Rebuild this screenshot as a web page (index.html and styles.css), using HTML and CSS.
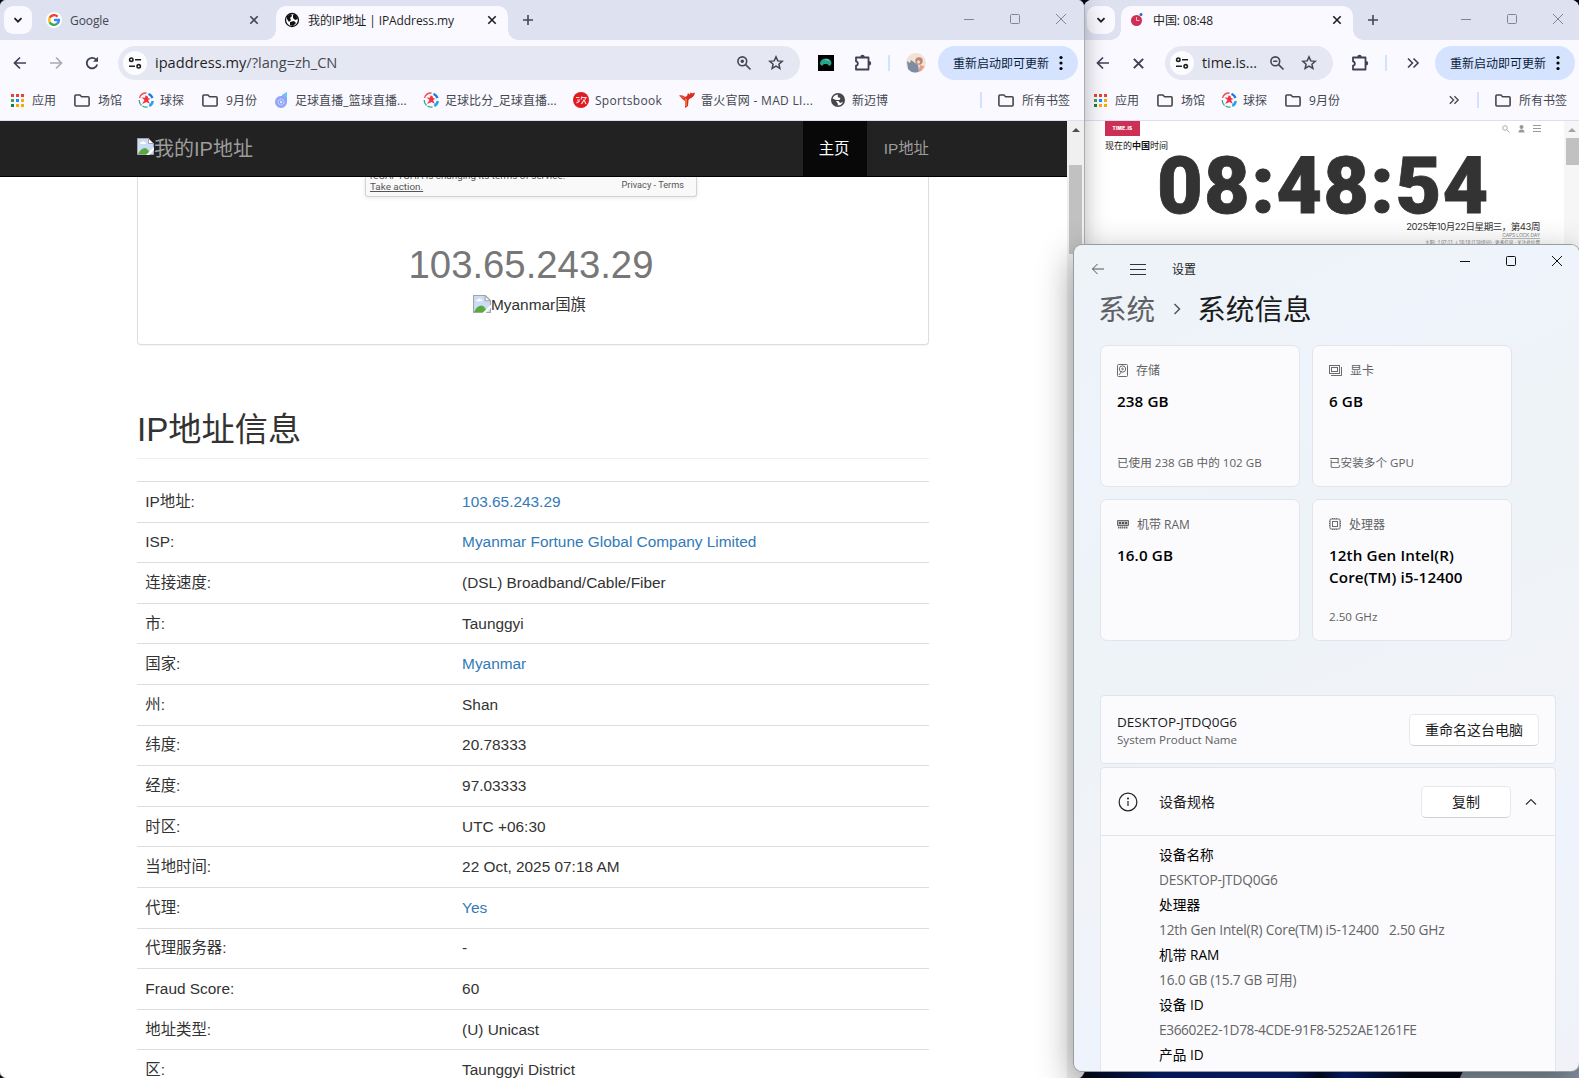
FILE: index.html
```html
<!DOCTYPE html>
<html lang="zh-CN">
<head>
    <meta charset="UTF-8">
    <meta name="viewport" content="width=device-width, initial-scale=1.0">
    <title>我的IP地址 | IPAddress.my</title>
    <link rel="stylesheet" href="styles.css">
</head>
<body>
    <!-- Icon dipakai bersama -->
    <svg class="sprite" width="0" height="0">
        <symbol id="i-down" viewBox="0 0 12 12"><path d="M2.5 4.2 6 7.7l3.5-3.5" fill="none" stroke="currentColor" stroke-width="1.8"/></symbol>
        <symbol id="i-x" viewBox="0 0 12 12"><path d="M2.3 2.3l7.4 7.4M9.7 2.3 2.3 9.7" fill="none" stroke="currentColor" stroke-width="1.6"/></symbol>
        <symbol id="i-plus" viewBox="0 0 12 12"><path d="M6 1v10M1 6h10" fill="none" stroke="currentColor" stroke-width="1.6"/></symbol>
        <symbol id="i-min" viewBox="0 0 12 12"><path d="M1 6.5h10" fill="none" stroke="currentColor"/></symbol>
        <symbol id="i-max" viewBox="0 0 12 12"><rect x="1.5" y="1.5" width="9" height="9" rx="1" fill="none" stroke="currentColor"/></symbol>
        <symbol id="i-close" viewBox="0 0 12 12"><path d="M1 1l10 10M11 1 1 11" fill="none" stroke="currentColor"/></symbol>
        <symbol id="i-back" viewBox="0 0 16 16"><path d="M14 8H3M8 2.5 2.5 8 8 13.5" fill="none" stroke="currentColor" stroke-width="1.7"/></symbol>
        <symbol id="i-fwd" viewBox="0 0 16 16"><path d="M2 8h11M8 2.5 13.500 8 8 13.500" fill="none" stroke="currentColor" stroke-width="1.7"/></symbol>
        <symbol id="i-reload" viewBox="0 0 16 16"><path d="M13.200 9.500A5.300 5.300 0 1 1 12 4.500l1.300 1.300" fill="none" stroke="currentColor" stroke-width="1.800"/><path d="M14 1.800v5H9z" fill="currentColor"/></symbol>
        <symbol id="i-tune" viewBox="0 0 16 16"><g fill="none" stroke="currentColor" stroke-width="1.600"><circle cx="4.300" cy="4.700" r="1.700"/><path d="M8 4.700h6M2 11.300h6"/><circle cx="11.700" cy="11.300" r="1.700"/></g></symbol>
        <symbol id="i-zoomin" viewBox="0 0 16 16"><g fill="none" stroke="currentColor" stroke-width="1.600"><circle cx="6.300" cy="6.300" r="4.400"/><path d="M9.600 9.600 14.500 14.500"/></g><circle cx="6.300" cy="6.300" r="1.700" fill="currentColor"/></symbol>
        <symbol id="i-zoomout" viewBox="0 0 16 16"><g fill="none" stroke="currentColor" stroke-width="1.600"><circle cx="6.300" cy="6.300" r="4.400"/><path d="M9.600 9.600 14.500 14.500M4.200 6.300h4.200"/></g></symbol>
        <symbol id="i-star" viewBox="0 0 16 16"><path d="M8 1.900l1.800 4 4.400.4-3.300 2.900 1 4.300L8 11.200l-3.900 2.300 1-4.300L1.800 6.300l4.400-.4z" fill="none" stroke="currentColor" stroke-width="1.500"/></symbol>
        <symbol id="i-puzzle" viewBox="0 0 18 18"><path d="M2 3.500h12.500v12H2v-3.800q1.800-.2 1.800-2.200T2 7.300z" fill="none" stroke="currentColor" stroke-width="1.800" stroke-linejoin="round"/><path d="M6.300 3a2.200 2.200 0 0 1 4.400 0zM15 7.100a2.200 2.200 0 0 1 0 4.400z" fill="currentColor"/></symbol>
        <symbol id="i-dots" viewBox="0 0 4 16"><circle cx="2" cy="2.500" r="1.600"/><circle cx="2" cy="8" r="1.600"/><circle cx="2" cy="13.500" r="1.600"/></symbol>
        <symbol id="i-more" viewBox="0 0 14 12"><path d="M2 1.500 6.500 6 2 10.500M7.500 1.500 12 6l-4.500 4.500" fill="none" stroke="currentColor" stroke-width="1.600"/></symbol>
        <symbol id="i-folder" viewBox="0 0 16 13"><path d="M.9 11V2q0-1 1-1h4l1.700 1.700h6.500q1 0 1 1V11q0 1-1 1H1.900q-1 0-1-1z" fill="none" stroke="#474747" stroke-width="1.600"/></symbol>
        <symbol id="i-apps" viewBox="0 0 13 13">
            <path d="M0 0h3v3H0zM5 0h3v3H5zM10 0h3v3h-3z" fill="#ea4335"/>
            <path d="M0 5h3v3H0z" fill="#34a853"/><path d="M5 5h3v3H5z" fill="#1a8cff"/><path d="M10 5h3v3h-3z" fill="#fbab05"/>
            <path d="M0 10h3v3H0z" fill="#188038"/><path d="M5 10h3v3H5zM10 10h3v3h-3z" fill="#f9ab00"/>
        </symbol>
        <symbol id="i-ball" viewBox="0 0 16 16">
            <g fill="none" stroke-width="1.300"><path d="M1.500 6a7 7 0 0 1 7-5" stroke="#f0504a"/><path d="M10.500 1.800A7 7 0 0 1 14.500 6" stroke="#1d7be0" stroke-width="2.400"/><path d="M14.800 9a7 7 0 0 1-3.500 5" stroke="#19a5ee" stroke-width="2.400"/><path d="M9.500 15a7 7 0 0 1-5-1" stroke="#36b37a"/><path d="M3.500 13.500A7 7 0 0 1 1.200 8" stroke="#2fa7a0"/></g>
            <path d="M3.500 5.500l3.500.3L7.500 3.500l2 .5.500 2 2.500 1-2.500 1 2 4-3.500-2L4 12l2.500-4z" fill="#f2323e"/>
        </symbol>
        <symbol id="i-broken" viewBox="0 0 17 17">
            <path d="M.5.500h11l5 5v11H.5z" fill="#cbdcf7" stroke="#a4a4a4"/>
            <path d="M11.500.500v5h5z" fill="#fff" stroke="#a4a4a4"/>
            <path d="M3 6q0-2 2-2 1-1.500 2.500 0Q9.500 4.300 9 6z" fill="#fff"/>
            <path d="M1 16q3-6 7-6 3 0 5 6z" fill="#58ab3a"/>
            <path class="tear" d="M9 17 17 9v3l-5 5z"/>
        </symbol>
    </svg>

    <!-- time.is -->
    <section class="window time-window">
        <div class="tabstrip">
            <span class="tab-search"><svg width="12" height="12"><use href="#i-down"/></svg></span>
            <div class="tab active">
                <svg class="favicon" width="16" height="16" viewBox="0 0 16 16"><circle cx="7.500" cy="8.500" r="5.500" fill="#cd2f55"/><path d="M7.500 5v3.500h3" stroke="#f5b9c6" fill="none"/><circle cx="12" cy="2.500" r="1.500" fill="#3c62b0"/></svg>
                <span class="tab-title">中国: 08:48</span>
                <svg width="12" height="12"><use href="#i-x"/></svg>
            </div>
            <svg class="new-tab" width="12" height="12"><use href="#i-plus"/></svg>
            <div class="controls">
                <svg width="12" height="12"><use href="#i-min"/></svg>
                <svg width="12" height="12"><use href="#i-max"/></svg>
                <svg width="12" height="12"><use href="#i-close"/></svg>
            </div>
        </div>
        <div class="toolbar">
            <span class="tool"><svg width="16" height="16"><use href="#i-back"/></svg></span>
            <span class="tool"><svg width="15" height="15"><use href="#i-x"/></svg></span>
            <div class="omnibox">
                <span class="site-info"><svg width="16" height="16"><use href="#i-tune"/></svg></span>
                <span class="url">time.is...</span>
                <svg width="16" height="16"><use href="#i-zoomout"/></svg>
                <svg width="16" height="16"><use href="#i-star"/></svg>
            </div>
            <svg class="puzzle" width="18" height="18"><use href="#i-puzzle"/></svg>
            <i class="sep"></i>
            <svg class="more" width="14" height="12"><use href="#i-more"/></svg>
            <span class="update">重新启动即可更新<svg width="4" height="16"><use href="#i-dots"/></svg></span>
        </div>
        <div class="bookmarks">
            <span class="bm"><svg class="apps" width="13" height="13"><use href="#i-apps"/></svg>应用</span>
            <span class="bm"><svg class="folder" width="16" height="13"><use href="#i-folder"/></svg>场馆</span>
            <span class="bm"><svg width="16" height="16"><use href="#i-ball"/></svg>球探</span>
            <span class="bm"><svg class="folder" width="16" height="13"><use href="#i-folder"/></svg>9月份</span>
            <svg class="bm-more" width="12" height="10"><use href="#i-more"/></svg>
            <i class="sep"></i>
            <span class="bm"><svg class="folder" width="16" height="13"><use href="#i-folder"/></svg>所有书签</span>
        </div>
        <div class="viewport">
            <div class="time-page">
                <div class="time-head">
                    <span class="time-logo">TIME.IS</span>
                    <div class="time-icons">
                        <svg width="8" height="8" viewBox="0 0 8 8"><circle cx="3" cy="3" r="2.300" fill="none" stroke="#aaa"/><path d="M5 5l2.500 2.500" stroke="#aaa"/></svg>
                        <svg width="7" height="8" viewBox="0 0 7 8"><circle cx="3.500" cy="2" r="2" fill="#999"/><path d="M.5 7.500q0-3 3-3t3 3z" fill="#999"/></svg>
                        <svg width="8" height="7" viewBox="0 0 8 7"><path d="M0 .5h8M0 3.500h8M0 6.500h8" stroke="#999"/></svg>
                    </div>
                </div>
                <p class="time-place">现在的<b>中国</b>时间</p>
                <div class="clock">08:48:54</div>
                <p class="time-date">2025年10月22日星期三，第43周</p>
                <p class="time-day"><span>CAPS LOCK DAY</span></p>
                <p class="time-sun">太阳: ↑07:11 ↓18:18 (11时8分) · <u>更多信息</u> · <u>关注此位置</u></p>
            </div>
            <div class="scrollbar"><i class="arrow"></i><i class="thumb"></i></div>
        </div>
    </section>

    <!-- ipaddress.my -->
    <section class="window ip-window">
        <div class="tabstrip">
            <span class="tab-search"><svg width="12" height="12"><use href="#i-down"/></svg></span>
            <div class="tab">
                <svg class="favicon google" width="16" height="16" viewBox="0 0 16 16">
                    <circle cx="8" cy="8" r="8" fill="#fff"/>
                    <g fill="none" stroke-width="2.400"><path d="M11.600 4.700A4.900 4.900 0 0 0 3.700 5.800" stroke="#ea4335"/><path d="M3.700 5.800a4.900 4.900 0 0 0 0 4.400" stroke="#fbbc05"/><path d="M3.700 10.200a4.900 4.900 0 0 0 7.500 1.500" stroke="#34a853"/><path d="M11.200 11.700A4.900 4.900 0 0 0 12.900 8H8" stroke="#4285f4"/></g>
                </svg>
                <span class="tab-title">Google</span>
                <svg width="12" height="12"><use href="#i-x"/></svg>
            </div>
            <div class="tab active">
                <svg class="favicon" width="16" height="16" viewBox="0 0 16 16"><circle cx="8" cy="8" r="6.500" fill="#fff" stroke="#111" stroke-width="1.300"/><path d="M3 4l4-2 1 2-2 2 1 2-2 2-2-3zM9 3l3 0 2 4-3 1-2-2zM6 10l4-1 2 2-3 3-3-1z" fill="#111"/></svg>
                <span class="tab-title">我的IP地址 | IPAddress.my</span>
                <svg width="12" height="12"><use href="#i-x"/></svg>
            </div>
            <svg class="new-tab" width="12" height="12"><use href="#i-plus"/></svg>
            <div class="controls">
                <svg width="12" height="12"><use href="#i-min"/></svg>
                <svg width="12" height="12"><use href="#i-max"/></svg>
                <svg width="12" height="12"><use href="#i-close"/></svg>
            </div>
        </div>
        <div class="toolbar">
            <span class="tool"><svg width="16" height="16"><use href="#i-back"/></svg></span>
            <span class="tool off"><svg width="16" height="16"><use href="#i-fwd"/></svg></span>
            <span class="tool"><svg width="16" height="16"><use href="#i-reload"/></svg></span>
            <div class="omnibox">
                <span class="site-info"><svg width="16" height="16"><use href="#i-tune"/></svg></span>
                <span class="url">ipaddress.my<em>/?lang=zh_CN</em></span>
                <svg width="16" height="16"><use href="#i-zoomin"/></svg>
                <svg width="16" height="16"><use href="#i-star"/></svg>
            </div>
            <svg class="ext" width="16" height="16" viewBox="0 0 16 16"><path d="M0 0h16v16H0z" fill="#000"/><path d="M2 9q0-5 5.500-5.500Q13 3.500 13.500 8q0 2-2 3l-2.500-2-3 0L4 11z" fill="#23a68c"/><path d="M6 5q4-2 6 1-3-1-6-1z" fill="#7fe0c8"/></svg>
            <svg class="puzzle" width="18" height="18"><use href="#i-puzzle"/></svg>
            <i class="sep"></i>
            <svg class="avatar" width="20" height="20" viewBox="0 0 20 20"><circle cx="10" cy="10" r="10" fill="#f3e1d3"/><path d="M1 8l3 2 1-3 4 3 3 2 1 6.500Q7 21.500 2 16z" fill="#7f8ba3"/><circle cx="13" cy="8" r="3.700" fill="#b58a7a"/><circle cx="12.500" cy="9" r="1.700" fill="#f5d3bf"/><path d="M14 12l4.500 1.500-3 4-3 1.500z" fill="#e79c90"/></svg>
            <span class="update">重新启动即可更新<svg width="4" height="16"><use href="#i-dots"/></svg></span>
        </div>
        <div class="bookmarks">
            <span class="bm"><svg class="apps" width="13" height="13"><use href="#i-apps"/></svg>应用</span>
            <span class="bm"><svg class="folder" width="16" height="13"><use href="#i-folder"/></svg>场馆</span>
            <span class="bm"><svg width="16" height="16"><use href="#i-ball"/></svg>球探</span>
            <span class="bm"><svg class="folder" width="16" height="13"><use href="#i-folder"/></svg>9月份</span>
            <span class="bm wide"><svg width="16" height="16" viewBox="0 0 16 16"><path d="M9 3l5-3v9.500A6 6 0 1 1 9 4z" fill="#8fa6fb"/><path d="M10 2.500 14 0v6z" fill="#66c8ff"/><circle cx="8" cy="10" r="3" fill="none" stroke="#dfe5ff" stroke-dasharray="2 1"/><circle cx="8" cy="10" r="1.200" fill="#dfe5ff"/></svg>足球直播_篮球直播...</span>
            <span class="bm wide"><svg width="16" height="16"><use href="#i-ball"/></svg>足球比分_足球直播...</span>
            <span class="bm sports"><svg width="16" height="16" viewBox="0 0 16 16"><circle cx="8" cy="8" r="8" fill="#e11b22"/><path d="M3 5.500h3.500M4 8h3M3.500 11l3-2M9 4.500l-1 3M9 5.500h4l-1 2M8.500 12l2.500-4 2 4" stroke="#ffd9da" fill="none" stroke-width="1.200"/></svg>Sportsbook</span>
            <span class="bm fire"><svg width="16" height="16" viewBox="0 0 16 16"><path d="M0 3.500q4-1 6 1.500l2-1 1-3 1.500 1.500L12 0l.5 1.500L16 .5q-1 5-5 6L9.500 8 9 14l-3 2 0-7Q3 7 0 3.500z" fill="#dd2a20"/><path d="M1 4.500q3-.5 4.500 1.500L6.500 8v6l1 0V7z" fill="#f6b455"/></svg>雷火官网 - MAD LI...</span>
            <span class="bm"><svg width="16" height="16" viewBox="0 0 16 16"><circle cx="8" cy="8" r="7" fill="#45474a"/><path d="M8 2.500q-1 2 .5 3l2 .5-1 2H6L2.700 6.500Q3.500 3 8 2.500zM6 9h2.500l1.500 2 3-1q-1.500 3.500-5.500 3.500L8 12z" fill="#fff"/></svg>新迈博</span>
            <i class="sep"></i>
            <span class="bm"><svg class="folder" width="16" height="13"><use href="#i-folder"/></svg>所有书签</span>
        </div>
        <div class="viewport">
            <div class="ip-page">
                <nav class="navbar">
                    <a class="brand"><svg class="dark" width="17" height="17"><use href="#i-broken"/></svg>我的IP地址</a>
                    <ul>
                        <li class="current">主页</li>
                        <li>IP地址</li>
                    </ul>
                </nav>
                <div class="container">
                    <div class="panel">
                        <div class="captcha">
                            <div>reCAPTCHA is changing its terms of service.<br><u>Take action.</u></div>
                            <span>Privacy - Terms</span>
                        </div>
                        <h2 class="my-ip">103.65.243.29</h2>
                        <p class="flag"><svg width="18" height="18"><use href="#i-broken"/></svg>Myanmar国旗</p>
                    </div>
                    <h1>IP地址信息</h1>
                    <table>
                        <tr><td>IP地址:</td><td><a>103.65.243.29</a></td></tr>
                        <tr><td>ISP:</td><td><a>Myanmar Fortune Global Company Limited</a></td></tr>
                        <tr><td>连接速度:</td><td>(DSL) Broadband/Cable/Fiber</td></tr>
                        <tr><td>市:</td><td>Taunggyi</td></tr>
                        <tr><td>国家:</td><td><a>Myanmar</a></td></tr>
                        <tr><td>州:</td><td>Shan</td></tr>
                        <tr><td>纬度:</td><td>20.78333</td></tr>
                        <tr><td>经度:</td><td>97.03333</td></tr>
                        <tr><td>时区:</td><td>UTC +06:30</td></tr>
                        <tr><td>当地时间:</td><td>22 Oct, 2025 07:18 AM</td></tr>
                        <tr><td>代理:</td><td><a>Yes</a></td></tr>
                        <tr><td>代理服务器:</td><td>-</td></tr>
                        <tr><td>Fraud Score:</td><td>60</td></tr>
                        <tr><td>地址类型:</td><td>(U) Unicast</td></tr>
                        <tr><td>区:</td><td>Taunggyi District</td></tr>
                    </table>
                </div>
            </div>
            <div class="scrollbar"><i class="arrow"></i><i class="thumb"></i></div>
        </div>
    </section>

    <!-- Settings -->
    <section class="settings">
        <header class="settings-bar">
            <svg width="14" height="14" viewBox="0 0 14 14"><path d="M13 7H1.500M6.500 2l-5 5 5 5" fill="none" stroke="#555"/></svg>
            <svg class="burger" width="16" height="12" viewBox="0 0 16 12"><path d="M0 1.500h16M0 6.500h16M0 11.500h16" stroke="#333"/></svg>
            <span>设置</span>
            <div class="controls">
                <svg width="12" height="12"><use href="#i-min"/></svg>
                <svg width="12" height="12"><use href="#i-max"/></svg>
                <svg width="12" height="12"><use href="#i-close"/></svg>
            </div>
        </header>
        <div class="crumbs"><span>系统</span><svg width="8" height="12" viewBox="0 0 8 12"><path d="M1.500 1 6.500 6l-5 5" fill="none" stroke="#555" stroke-width="1.500"/></svg><b>系统信息</b></div>
        <div class="cards">
            <div class="card">
                <h3><svg width="11" height="13" viewBox="0 0 11 13"><g fill="none" stroke="#6b6b6b"><rect x=".5" y=".5" width="10" height="12" rx="1"/><circle cx="5.500" cy="5" r="3.200"/><circle cx="5.500" cy="5" r=".8"/><path d="M2 11l3-4"/></g></svg>存储</h3>
                <strong>238 GB</strong>
                <small>已使用 238 GB 中的 102 GB</small>
            </div>
            <div class="card">
                <h3><svg width="13" height="11" viewBox="0 0 13 11"><g fill="none" stroke="#6b6b6b"><rect x=".5" y=".5" width="10" height="8"/><rect x="2.500" y="2.500" width="6" height="4"/><path d="M2 10.500h10.500V2"/></g></svg>显卡</h3>
                <strong>6 GB</strong>
                <small>已安装多个 GPU</small>
            </div>
            <div class="card">
                <h3><svg width="12" height="9" viewBox="0 0 12 9"><path d="M.5.500h11v5h-11z" fill="#bbb" stroke="#6b6b6b"/><path d="M2 3h8" stroke="#555" stroke-width="2" stroke-dasharray="2 1"/><path d="M1 7.500h10" stroke="#6b6b6b" stroke-width="2" stroke-dasharray="1.500 .5"/></svg>机带 RAM</h3>
                <strong>16.0 GB</strong>
            </div>
            <div class="card">
                <h3><svg width="12" height="12" viewBox="0 0 12 12"><g fill="none" stroke="#6b6b6b"><rect x="1" y="1" width="10" height="10" rx="1"/><rect x="3.500" y="3.500" width="5" height="5"/><path d="M3 .5h6M3 11.500h6M.5 3v6M11.500 3v6" stroke-dasharray="1 1"/></g></svg>处理器</h3>
                <strong>12th Gen Intel(R)<br>Core(TM) i5-12400</strong>
                <small>2.50 GHz</small>
            </div>
        </div>
        <div class="row pc-name">
            <div>
                <div class="pc">DESKTOP-JTDQ0G6</div>
                <div class="model">System Product Name</div>
            </div>
            <button>重命名这台电脑</button>
        </div>
        <div class="specs">
            <div class="row">
                <svg width="20" height="20" viewBox="0 0 20 20"><circle cx="10" cy="10" r="8.900" fill="none" stroke="#222" stroke-width="1.200"/><path d="M10 9v5" stroke="#222" stroke-width="1.200"/><circle cx="10" cy="6.500" r=".9"/></svg>
                <span>设备规格</span>
                <button class="copy">复制</button>
                <svg width="12" height="8" viewBox="0 0 12 8"><path d="M1 6.500l5-5 5 5" fill="none" stroke="#333" stroke-width="1.200"/></svg>
            </div>
            <dl>
                <dt>设备名称</dt><dd>DESKTOP-JTDQ0G6</dd>
                <dt>处理器</dt><dd>12th Gen Intel(R) Core(TM) i5-12400 &nbsp; 2.50 GHz</dd>
                <dt>机带 RAM</dt><dd>16.0 GB (15.7 GB 可用)</dd>
                <dt>设备 ID</dt><dd class="id">E36602E2-1D78-4CDE-91F8-5252AE1261FE</dd>
                <dt>产品 ID</dt>
            </dl>
        </div>
    </section>
</body>
</html>
```
FILE: styles.css
```css
* {
    margin: 0;
    padding: 0;
    box-sizing: border-box;
}

body {
    position: relative;
    width: 1579px;
    height: 1078px;
    overflow: hidden;
    background: linear-gradient(115deg, transparent 346px, #8d9dad 347px) 1084px 1064px / 495px 14px no-repeat,
        linear-gradient(to right, #04081c 1084px, #06207a 1160px, #06237e 1290px, #030a2a 1320px, #06237e 1345px, #020818 1410px, #020818) #7d93a8;
    font-family: "Open Sans", "Noto Sans CJK SC", sans-serif;
    font-size: 12px;
    color: #1f1f1f;
}

svg {
    display: block;
    flex-shrink: 0;
}

.sprite {
    position: absolute;
}

.tear {
    fill: #fff;
}

/* Chrome */
.window {
    position: absolute;
    top: 0;
    display: flex;
    flex-direction: column;
    background: #f9f9ff;
    border-radius: 8px;
    overflow: hidden;
}

.ip-window {
    left: 0;
    width: 1084px;
    height: 1078px;
    box-shadow: 0 0 0 1px #a9abb3, 0 4px 24px rgba(0, 0, 0, 0.3);
}

.time-window {
    left: 1084px;
    width: 495px;
    height: 400px;
}

.tabstrip {
    display: flex;
    height: 40px;
    padding: 6px 0 0 4px;
    background: #dee1f0;
}

.time-window .tabstrip {
    padding-left: 3px;
}

.tab-search {
    display: flex;
    align-items: center;
    justify-content: center;
    width: 28px;
    height: 28px;
    margin-right: 6px;
    border-radius: 9px;
    background: #f9f9ff;
}

.tab {
    display: flex;
    align-items: center;
    width: 232px;
    height: 34px;
    padding: 0 10px 6px 8px;
    color: #44474f;
}

.ip-window .tab:not(.active) {
    width: 238px;
    padding-right: 16px;
}

.tab.active {
    position: relative;
    background: #f9f9ff;
    border-radius: 10px 10px 0 0;
    color: #1f1f1f;
}

/* lekukan bawah tab aktif */
.tab.active::before,
.tab.active::after {
    content: "";
    position: absolute;
    bottom: 0;
    left: -10px;
    width: 10px;
    height: 10px;
    background: radial-gradient(circle at 0 0, transparent 9.5px, #f9f9ff 10px);
}

.tab.active::after {
    left: auto;
    right: -10px;
    background: radial-gradient(circle at 100% 0, transparent 9.5px, #f9f9ff 10px);
}

.favicon {
    margin-right: 8px;
}

.tab-title {
    flex: 1;
    white-space: nowrap;
    letter-spacing: -0.08px;
}

.new-tab {
    margin: 8px 0 0 14px;
    color: #44474f;
}

.controls {
    display: flex;
    gap: 34px;
    margin: 7px 17px 0 auto;
    color: #84868f;
}

.time-window .controls {
    margin-right: 15px;
}

.toolbar {
    display: flex;
    align-items: center;
    height: 46px;
    padding: 0 6px 0 12px;
    color: #3c4254;
}

.tool {
    width: 36px;
}

.tool.off {
    color: #a9abb3;
}

.omnibox {
    display: flex;
    align-items: center;
    width: 682px;
    height: 34px;
    margin-left: -2px;
    padding: 0 16px 0 5px;
    border-radius: 17px;
    background: #e5e8f3;
    color: #44474f;
    gap: 16px;
}

.site-info {
    display: flex;
    align-items: center;
    justify-content: center;
    flex-shrink: 0;
    width: 24px;
    height: 24px;
    border-radius: 50%;
    background: #fcfcff;
    color: #1f1f1f;
}

.url {
    flex: 1;
    min-width: 0;
    margin: -2px 0 0 -8px;
    font-size: 14.6px;
    white-space: nowrap;
    color: #1f1f1f;
}

.time-window .url {
    font-size: 14.2px;
}

.url em {
    font-style: normal;
    color: #474a52;
}

.ext {
    margin-left: 18px;
}

.puzzle {
    margin-left: 20px;
}

.sep {
    width: 2px;
    height: 16px;
    background: #d3e2fd;
}

.toolbar .sep {
    margin-left: 16px;
}

.avatar {
    margin-left: 16px;
}

.update {
    display: flex;
    align-items: center;
    justify-content: space-between;
    width: 140px;
    height: 34px;
    margin-left: auto;
    padding: 0 15px;
    border-radius: 17px;
    background: #d5e3ff;
    color: #0b1d3a;
    white-space: nowrap;
}

.time-window .toolbar {
    padding: 0 4px 0 11px;
}

.time-window .omnibox {
    width: 168px;
    margin-left: -2px;
}

.time-window .puzzle {
    margin-left: 18px;
}

.more {
    margin-left: 19px;
}

.bookmarks {
    display: flex;
    align-items: center;
    gap: 16px;
    height: 35px;
    padding: 0 14px 6px 8px;
    border-bottom: 1px solid #dddff0;
    color: #44474f;
}

.time-window .bookmarks {
    padding-right: 12px;
    padding-left: 7px;
}

.bm {
    display: flex;
    align-items: center;
    gap: 6px;
    white-space: nowrap;
}

.bm .apps {
    margin: 0 2px 0 3px;
}

.bm .folder {
    margin: 0 2px;
}

.bm.wide {
    width: 134px;
    letter-spacing: 0.1px;
}

.bm.sports {
    width: 90px;
    letter-spacing: 0.3px;
}

.bm.fire {
    width: 135px;
    letter-spacing: 0.3px;
}

.bookmarks .sep {
    margin-left: auto;
    margin-right: -2px;
}

.bm-more {
    margin-left: auto;
    color: #474747;
}

.bm-more + .sep {
    margin-left: 1px !important;
}

.viewport {
    display: flex;
    flex: 1;
    min-height: 0;
    background: #fff;
}

.scrollbar {
    display: flex;
    flex-direction: column;
    align-items: center;
    width: 17px;
    padding-top: 7px;
    background: #f0f0f1;
}

.arrow {
    border: 4px solid transparent;
    border-top: 0;
    border-bottom: 4px solid #505050;
}

.thumb {
    width: 13px;
    height: 89px;
    margin-top: 33px;
    background: #c1c1c1;
}

/* Halaman IP */
.ip-page {
    flex: 1;
    overflow: hidden;
    font-family: "Liberation Sans", "Noto Sans CJK SC", sans-serif;
    font-size: 15.4px;
    line-height: 22px;
    color: #333;
}

.navbar {
    display: flex;
    justify-content: space-between;
    height: 56px;
    padding: 0 122px 0 137px;
    border-bottom: 1px solid #000;
    background: #222;
    color: #9d9d9d;
}

.brand {
    display: flex;
    align-items: center;
    font-size: 20px;
}

.brand svg {
    margin-bottom: 4px;
}

.dark .tear {
    fill: #222;
}

.navbar ul {
    display: flex;
    list-style: none;
}

.navbar li {
    padding: 17px 16px 0;
}

.navbar li.current {
    width: 64px;
    margin-right: 1px;
    background: #080808;
    color: #fff;
}

.container {
    width: 792px;
    margin-left: 137px;
}

.panel {
    height: 168px;
    border: 1px solid #ddd;
    border-top: 0;
    border-radius: 0 0 4px 4px;
    box-shadow: 0 1px 1px rgba(0, 0, 0, 0.05);
    overflow: hidden;
}

.captcha {
    display: flex;
    justify-content: space-between;
    width: 332px;
    height: 20px;
    margin-left: 227px;
    padding: 0 12px 0 4px;
    border: 1px solid #d3d3d3;
    border-top: 0;
    border-radius: 0 0 3px 3px;
    background: #f9f9f9;
    box-shadow: 0 1px 4px rgba(0, 0, 0, 0.1);
    font: 9.9px/11px Roboto, sans-serif;
    color: #555;
}

.captcha div {
    margin-top: -7px;
}

.captcha span {
    margin-top: 2px;
    font-size: 9.2px;
}

.my-ip {
    margin-top: 47px;
    padding-right: 4px;
    font-size: 38.3px;
    font-weight: normal;
    line-height: 42px;
    text-align: center;
    color: #777;
}

.flag {
    display: flex;
    justify-content: center;
    align-items: center;
    margin-top: 8px;
    padding-right: 7px;
}

.flag svg {
    margin-top: -3px;
}

.container h1 {
    height: 114px;
    padding-top: 66px;
    border-bottom: 1px solid #eee;
    font-size: 33.2px;
    font-weight: normal;
    line-height: 38px;
}

table {
    width: 100%;
    margin-top: 22px;
    border-spacing: 0;
    table-layout: fixed;
}

td {
    height: 40.6px;
    padding: 0 8.8px 0 8.3px;
    border-top: 1px solid #ddd;
    white-space: nowrap;
}

td:first-child {
    width: 40%;
}

td a {
    color: #337ab7;
}

/* time.is */
.time-page {
    flex: 1;
    padding: 0 24px 0 21px;
    color: #333;
}

.time-window .scrollbar {
    width: 15px;
    align-items: flex-end;
    background: #f6f6f6;
}

.time-window .arrow {
    margin-right: 3px;
    border-bottom-color: #a3a3a3;
}

.time-window .thumb {
    height: 27px;
    margin-top: 6px;
}

.time-head {
    display: flex;
    justify-content: space-between;
}

.time-logo {
    width: 35px;
    height: 15px;
    background: #cd2f55;
    color: #fff;
    font: 900 4.6px/15px Inter, sans-serif;
    letter-spacing: 0.3px;
    text-align: center;
}

.time-icons {
    display: flex;
    gap: 8px;
    margin: 4px -1px 0 0;
}

.time-place {
    font-size: 9px;
    line-height: 20px;
    color: #111;
}

.clock {
    height: 57px;
    margin-left: 52px;
    font: 900 79px/61px Roboto, "Noto Sans", sans-serif;
    letter-spacing: 1.3px;
    white-space: nowrap;
    color: #333;
    -webkit-text-stroke: 0.8px #333;
}

.time-date {
    margin-top: 7px;
    font: 9.5px/13px Inter, "Noto Sans CJK SC", sans-serif;
    letter-spacing: -0.45px;
    text-align: right;
    white-space: nowrap;
}

.time-day {
    font: 5px/5px Inter, sans-serif;
    letter-spacing: -0.15px;
    text-align: right;
    color: #888;
}

.time-day span {
    border-bottom: 1px solid #bbb;
}

.time-sun {
    margin-top: 0;
    font-size: 4.6px;
    line-height: 8px;
    text-align: right;
    white-space: nowrap;
    color: #777;
}

/* Settings */
.settings {
    position: absolute;
    left: 1074px;
    top: 245px;
    width: 505px;
    height: 826px;
    padding: 0 23px 0 26px;
    border-radius: 8px;
    overflow: hidden;
    background: linear-gradient(155deg, #edf3f7 0, #eff3fb 22%, #edf3f6 42%, #f1f3f8 60%, #eff3fb 75%, #f0f2f8 100%);
    box-shadow: 0 0 0 1px #999ca1, 0 12px 36px rgba(0, 0, 0, 0.42);
    color: #1b1b1b;
}

.settings-bar {
    display: flex;
    align-items: center;
    height: 48px;
    margin: 0 -7px 0 -9px;
}

.burger {
    margin: 0 26px 0 25px;
}

.settings .controls {
    align-self: flex-start;
    margin: 10px 0 0 auto;
    color: #111;
}

.crumbs {
    display: flex;
    align-items: center;
    height: 52px;
    margin: -10px 0 13px -2px;
    font-size: 28.6px;
    line-height: 52px;
    color: #5f6064;
}

.crumbs svg {
    margin: 0 16px 0 18px;
}

.crumbs b {
    font-weight: normal;
    color: #1b1b1b;
}

.cards {
    display: grid;
    grid-template-columns: 200px 200px;
    grid-auto-rows: 142px;
    gap: 12px;
    margin-top: -3px;
}

.card {
    display: flex;
    flex-direction: column;
    padding: 15px 16px 14px;
    border: 1px solid #e2e5eb;
    border-radius: 7px;
    background: #fbfbfe;
}

.card h3 {
    display: flex;
    align-items: center;
    gap: 8px;
    height: 18px;
    font-size: 12px;
    font-weight: normal;
    color: #616161;
}

.card strong {
    margin-top: 11px;
    font-size: 15.2px;
    font-weight: 600;
    line-height: 22px;
    letter-spacing: 0.12px;
    white-space: nowrap;
    color: #000;
}

.card small {
    margin-top: auto;
    font-size: 11.6px;
    line-height: 18px;
    white-space: nowrap;
    color: #616161;
}

.row {
    display: flex;
    align-items: center;
    height: 68px;
    padding: 0 16px;
    font-size: 14px;
}

.pc-name {
    justify-content: space-between;
    height: 69px;
    margin-top: 54px;
    border: 1px solid #e2e5eb;
    border-radius: 4px;
    background: #fbfbfe;
}

.pc {
    padding-top: 2px;
    font-size: 13.5px;
    line-height: 18px;
}

.model {
    font-size: 11.6px;
    line-height: 17px;
    color: #616161;
}

button {
    height: 32px;
    padding: 0 15px 2px;
    border: 1px solid #e8e8ea;
    border-bottom-color: #cfcfd1;
    border-radius: 5px;
    background: #fff;
    font: inherit;
    font-size: 14px;
    color: #1b1b1b;
}

.copy {
    width: 90px;
    margin-left: auto;
    margin-right: 14px;
}

.specs {
    height: 400px;
    margin-top: 3px;
    border: 1px solid #e2e5eb;
    border-radius: 4px 4px 0 0;
    background: #fbfbfe;
}

.specs .row {
    padding-left: 17px;
    padding-right: 18px;
    border-bottom: 1px solid #e2e4e8;
}

.specs .row span {
    margin: -2px 0 0 21px;
}

dl {
    padding: 6px 0 0 58px;
    font-size: 13.7px;
    line-height: 25px;
}

dt {
    color: #000;
}

dd {
    color: #656565;
    letter-spacing: -0.2px;
}

dd.id {
    letter-spacing: -0.38px;
}
```
